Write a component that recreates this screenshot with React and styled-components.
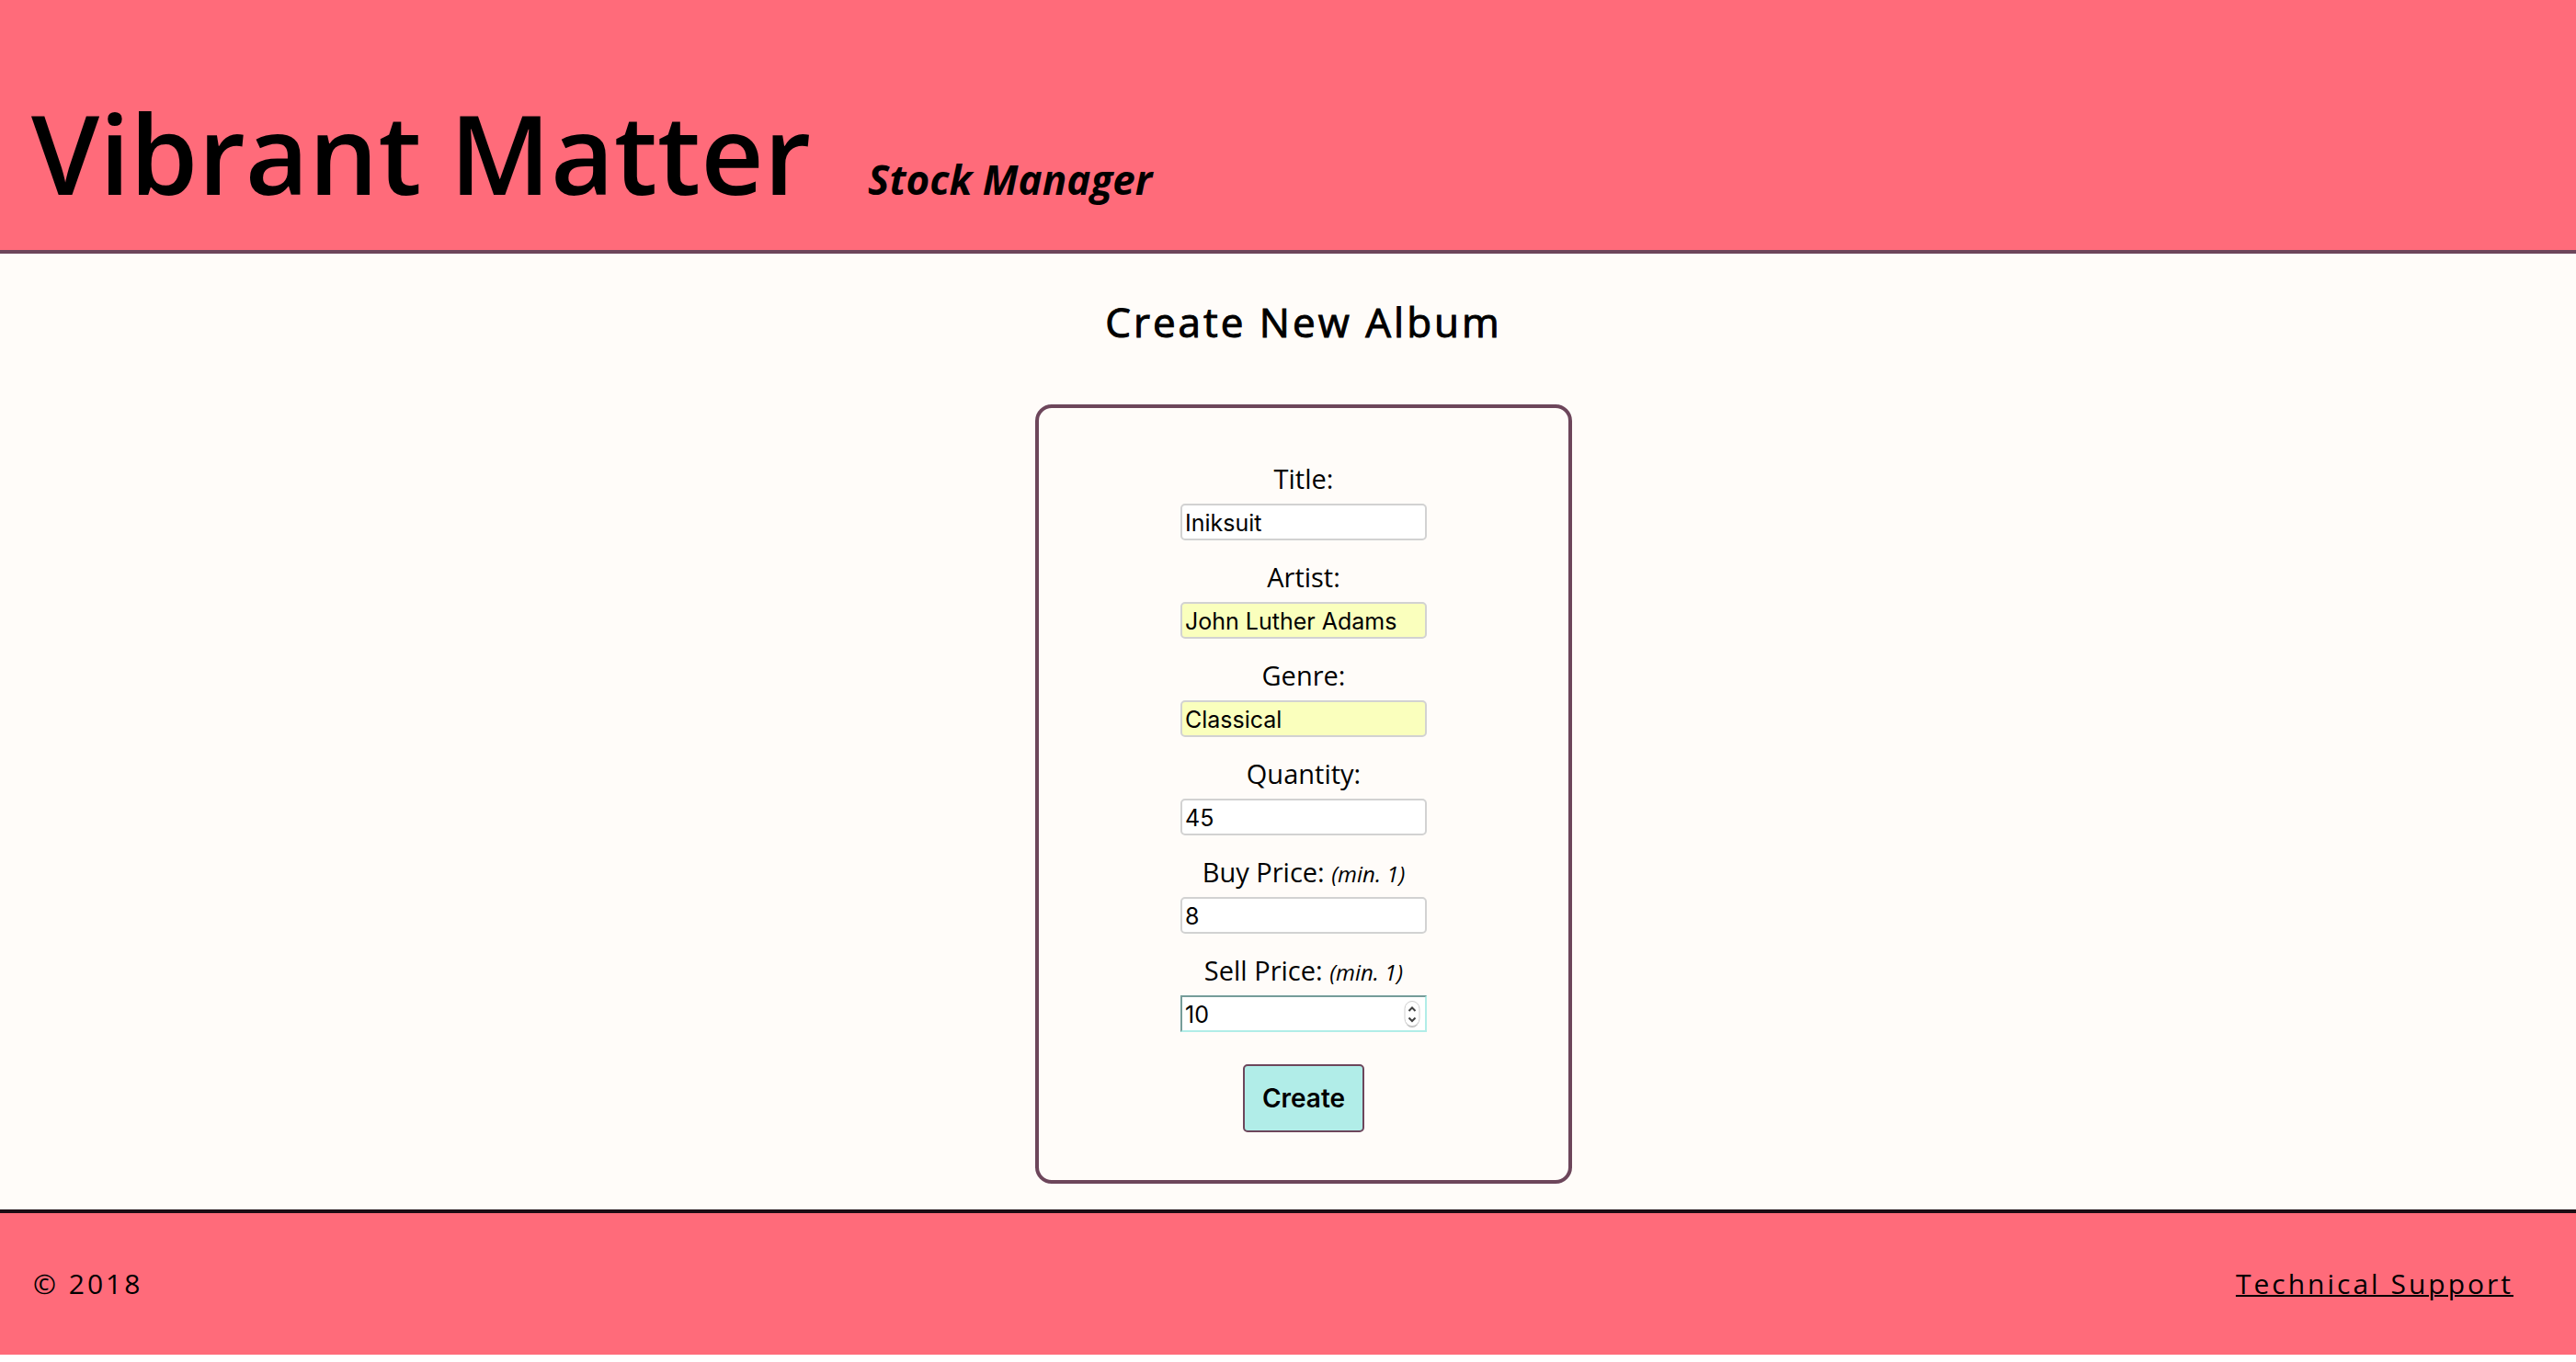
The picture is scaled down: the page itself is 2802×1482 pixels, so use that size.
import React, { useState } from "react";
import styled, { createGlobalStyle } from "styled-components";

const colors = {
  pink: "#FF6B7A",
  cream: "#FFFCF9",
  mint: "#B1EDE8",
  mintShade: "#759C99",
  plum: "#6D465B",
  ink: "#1B0D14",
  autofill: "#FAFFBD",
  line: "#D2D2D2",
};

const GlobalStyle = createGlobalStyle`
  *, *::before, *::after { box-sizing: border-box; }
  body {
    margin: 0;
    background: #fff;
    color: #000;
    font-family: "Open Sans", "Noto Sans", sans-serif;
    font-size: 29px;
    line-height: 40px;
  }
`;

const Header = styled.header`
  display: flex;
  align-items: baseline;
  gap: 62px;
  padding: 96px 34px 36px;
  background: ${colors.pink};
  border-bottom: 4px solid ${colors.plum};
`;

const Brand = styled.h1`
  margin: 0;
  font-size: 119px;
  font-weight: 600;
  line-height: 140px;
`;

const Tagline = styled.p`
  margin: 0;
  font-size: 44px;
  font-style: italic;
  font-weight: 700;
`;

const Main = styled.main`
  display: flex;
  flex-direction: column;
  align-items: center;
  gap: 60px;
  padding: 44px 0 28px 34px;
  background: ${colors.cream};
`;

const PageTitle = styled.h2`
  margin: 0;
  font-size: 44px;
  font-weight: 400;
  line-height: 60px;
  letter-spacing: 3px;
  -webkit-text-stroke: 1px #000;
`;

const AlbumForm = styled.form`
  display: flex;
  flex-direction: column;
  align-items: center;
  gap: 20px;
  width: 584px;
  max-width: 100%;
  padding: 57px 20px 52px;
  border: 4px solid ${colors.plum};
  border-radius: 18px;
`;

const Field = styled.div`
  display: flex;
  flex-direction: column;
  align-items: center;
  gap: 7px;
`;

const Hint = styled.em`
  font-size: 24px;
  line-height: 24px;
`;

const InputWrap = styled.div`
  position: relative;
  display: flex;
`;

const Input = styled.input`
  width: 268px;
  height: 40px;
  padding: 3px 3px 2px;
  border: 2px solid;
  border-color: ${(p) =>
    p.$active
      ? `${colors.mintShade} ${colors.mint} ${colors.mint} ${colors.mintShade}`
      : colors.line};
  border-radius: ${(p) => (p.$active ? "0" : "5px")};
  background: ${(p) => (p.$filled ? colors.autofill : "#fff")};
  color: #000;
  font-family: Inter, "Liberation Sans", sans-serif;
  font-size: 25px;
  outline: none;
  appearance: textfield;

  &::-webkit-inner-spin-button,
  &::-webkit-outer-spin-button {
    appearance: none;
    margin: 0;
  }
`;

const Stepper = styled.svg`
  position: absolute;
  top: 5px;
  right: 7px;
  width: 18px;
  height: 31px;
`;

const CreateButton = styled.button`
  width: 132px;
  height: 74px;
  margin-top: 15px;
  padding: 0;
  border: 2px solid ${colors.plum};
  border-radius: 5px;
  background: ${colors.mint};
  color: #000;
  font-family: Inter, "Liberation Sans", sans-serif;
  font-size: 28px;
  font-weight: 600;
`;

const Footer = styled.footer`
  display: flex;
  justify-content: space-between;
  padding: 57px 68px 57px 36px;
  border-top: 4px solid ${colors.ink};
  background: ${colors.pink};
  font-size: 30px;
  letter-spacing: 3px;
`;

const Copyright = styled.p`
  margin: 0;
`;

const SupportLink = styled.a`
  color: #000;
  text-decoration-thickness: 2px;
`;

const fields = [
  { name: "title", label: "Title:", type: "text", value: "Iniksuit" },
  { name: "artist", label: "Artist:", type: "text", value: "John Luther Adams", filled: true },
  { name: "genre", label: "Genre:", type: "text", value: "Classical", filled: true },
  { name: "quantity", label: "Quantity:", type: "number", value: "45" },
  { name: "buy_price", label: "Buy Price:", type: "number", value: "8", min: 1 },
  { name: "sell_price", label: "Sell Price:", type: "number", value: "10", min: 1, active: true },
];

function StepperIcon() {
  return (
    <Stepper viewBox="0 0 18 31" fill="none" aria-hidden="true">
      <rect x="1.5" y="3" width="15" height="27" rx="7.5" fill="#B8B8B8" />
      <rect x="1" y="1.5" width="16" height="27" rx="8" fill="#fff" stroke="#CFCFCF" />
      <path d="M5.5 12 9 8.5l3.5 3.5M5.5 19.5 9 23l3.5-3.5" stroke="#404040" strokeWidth="2" />
    </Stepper>
  );
}

function AlbumField({ name, label, type, value, min, filled, active }) {
  const [current, setCurrent] = useState(value);
  return (
    <Field>
      <label htmlFor={name}>
        {label} {min && <Hint>(min. {min})</Hint>}
      </label>
      <InputWrap>
        <Input
          id={name}
          name={name}
          type={type}
          min={min}
          value={current}
          onChange={(e) => setCurrent(e.target.value)}
          $filled={filled}
          $active={active}
        />
        {active && <StepperIcon />}
      </InputWrap>
    </Field>
  );
}

export default function App() {
  return (
    <>
      <GlobalStyle />
      <Header>
        <Brand>Vibrant Matter</Brand>
        <Tagline>Stock Manager</Tagline>
      </Header>
      <Main>
        <PageTitle>Create New Album</PageTitle>
        <AlbumForm onSubmit={(e) => e.preventDefault()}>
          {fields.map((f) => (
            <AlbumField key={f.name} {...f} />
          ))}
          <CreateButton type="submit">Create</CreateButton>
        </AlbumForm>
      </Main>
      <Footer>
        <Copyright>© 2018</Copyright>
        <SupportLink href="#support">Technical Support</SupportLink>
      </Footer>
    </>
  );
}
